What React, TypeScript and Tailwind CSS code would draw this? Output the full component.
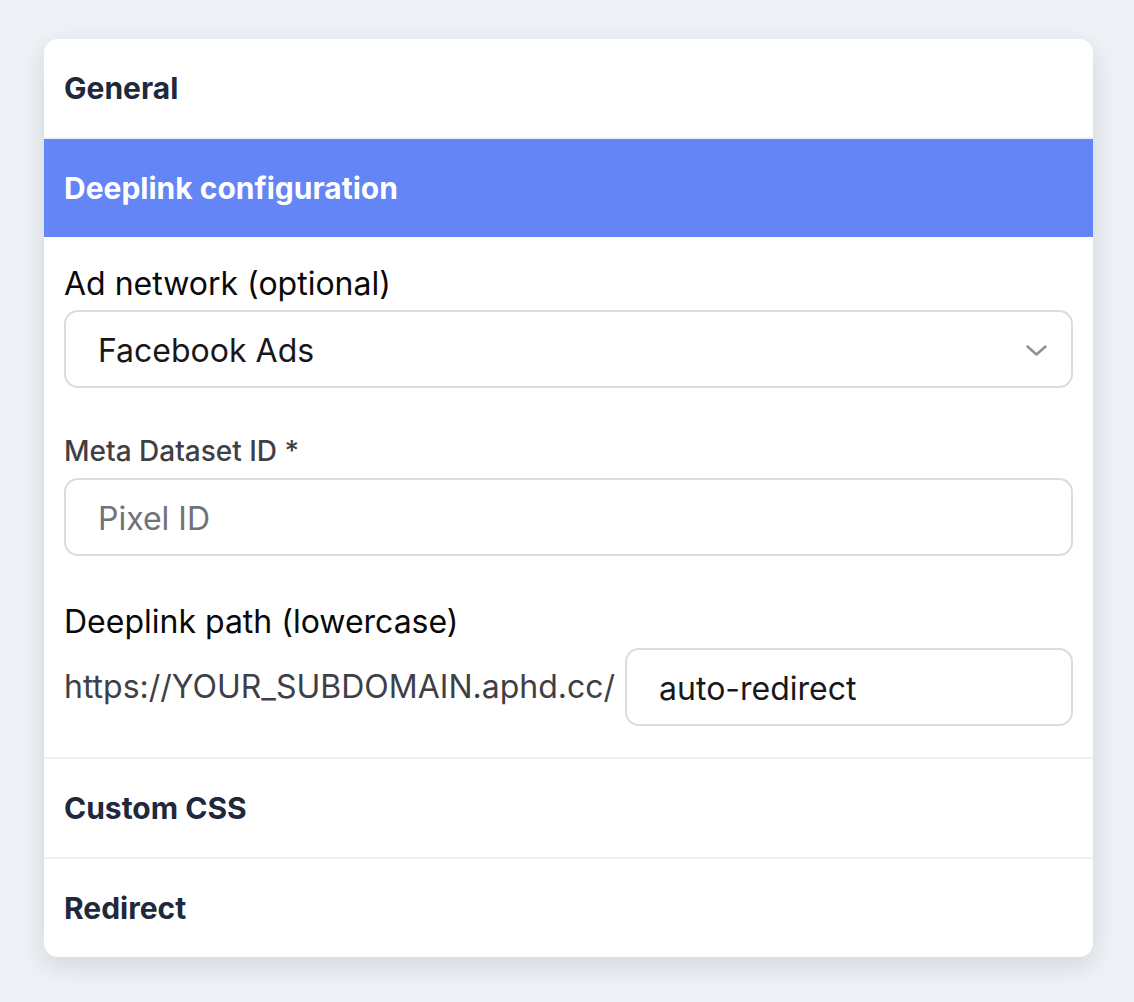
import React from "react";

function ChevronDown() {
  return (
    <svg width="21" height="11" viewBox="0 0 21 11" fill="none" stroke="#8e8e96" strokeWidth="2.4" strokeLinecap="round" strokeLinejoin="round">
      <path d="M1.5 1.5l9 8 9-8" />
    </svg>
  );
}

export default function App() {
  return (
    <div className="min-h-[1002px] w-full bg-[#eef2f6] pt-[39px] pl-[44px] pr-[41px]" style={{ fontFamily: "Inter, 'Noto Sans', sans-serif" }}>
      <div className="w-[1049px] overflow-hidden rounded-[14px] bg-white shadow-[0_8px_26px_rgba(15,23,42,0.13)]">
        <div className="flex h-[100px] items-center border-b-2 border-[#eef1f5] px-[20px]">
          <span className="text-[30px] font-bold text-[#1e293b]">General</span>
        </div>
        <div className="flex h-[98px] items-center bg-[#6385f5] px-[20px]">
          <span className="text-[30px] font-bold text-white">Deeplink configuration</span>
        </div>
        <div className="flex flex-col px-[20px] pt-[27px] pb-[31px]">
          <label className="text-[32px] leading-[40px] text-[#09090b]">Ad network (optional)</label>
          <div className="mt-[6px] flex h-[78px] items-center justify-between rounded-[14px] border-2 border-[#dcdce0] pt-[3px] pl-[32px] pr-[24px]">
            <span className="text-[32px] text-[#18181b]">Facebook Ads</span>
            <ChevronDown />
          </div>
          <label className="mt-[45px] text-[28px] font-medium leading-[36px] text-[#3f3f46]">Meta Dataset ID *</label>
          <div className="mt-[9px] flex h-[78px] items-center rounded-[14px] border-2 border-[#dcdce0] pt-[3px] pl-[32px]">
            <span className="text-[32px] text-[#71717a]">Pixel ID</span>
          </div>
          <label className="mt-[46px] text-[32px] leading-[40px] text-[#09090b]">Deeplink path (lowercase)</label>
          <div className="mt-[6px] flex items-center gap-[10px]">
            <span className="text-[32px] text-[#3f3f46]">https://YOUR_SUBDOMAIN.aphd.cc/</span>
            <div className="flex h-[78px] flex-1 items-center rounded-[14px] border-2 border-[#dcdce0] pt-[3px] pl-[32px]">
              <span className="text-[32px] text-[#18181b]">auto-redirect</span>
            </div>
          </div>
        </div>
        <div className="flex h-[100px] items-center border-t-2 border-[#eef1f5] px-[20px]">
          <span className="text-[30px] font-bold text-[#1e293b]">Custom CSS</span>
        </div>
        <div className="flex h-[100px] items-center border-t-2 border-[#eef1f5] px-[20px]">
          <span className="text-[30px] font-bold text-[#1e293b]">Redirect</span>
        </div>
      </div>
    </div>
  );
}
